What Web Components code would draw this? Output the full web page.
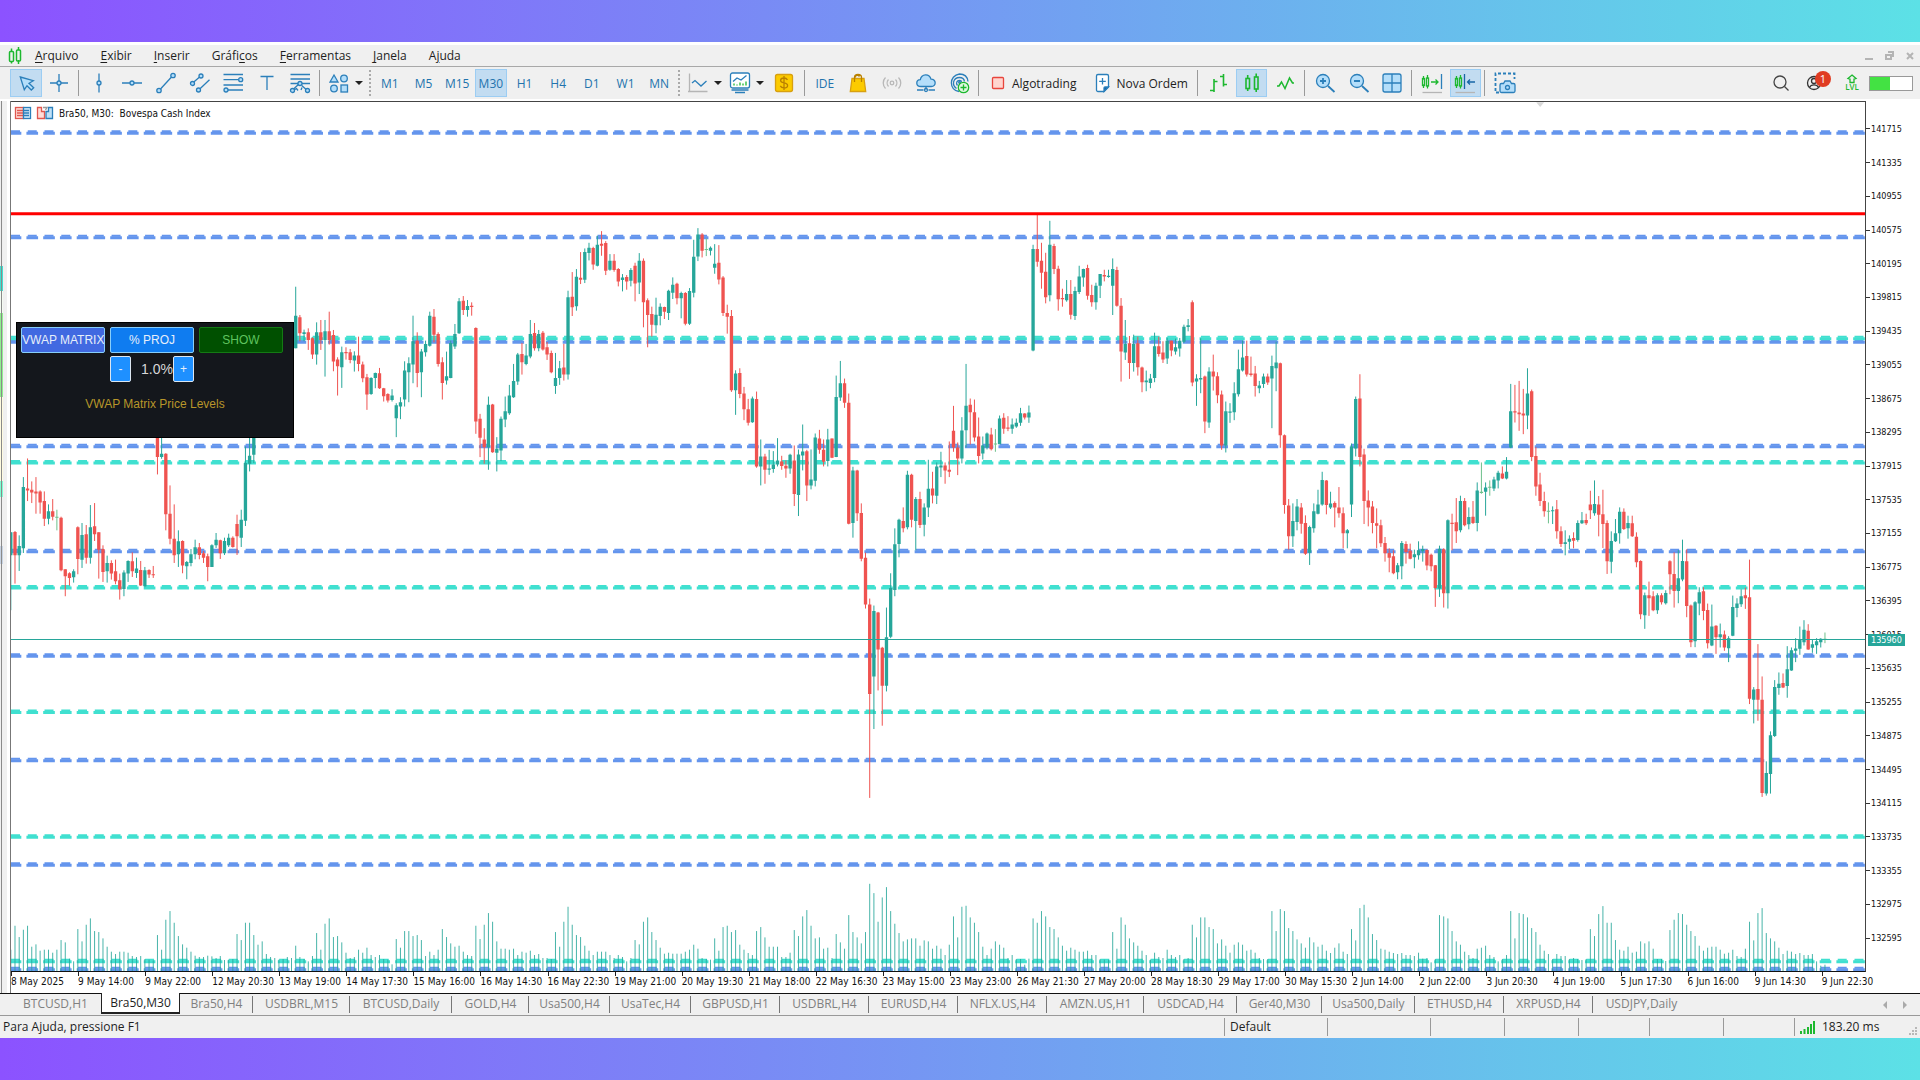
<!DOCTYPE html>
<html lang="pt-BR">
<head>
<meta charset="utf-8">
<meta name="viewport" content="width=device-width, initial-scale=1">
<title>Bra50, M30</title>
<style>
html, body {
  margin: 0;
  height: 100%;
}
body {
  font-family: 'Open Sans', 'Noto Sans', sans-serif;
  font-size: 12px;
  color: #1e1e1e;
}
</style>
</head>
<body>
<trade-desk>
  <menu-bar slot="top"></menu-bar>
  <tool-bar slot="top"></tool-bar>
  <price-chart heading="Bra50, M30:  Bovespa Cash Index" price="135960">
    <matrix-panel></matrix-panel>
  </price-chart>
  <chart-tabs slot="bottom"></chart-tabs>
  <status-bar slot="bottom"></status-bar>
</trade-desk>

<script>
const GREEN = '#1db82f';

const ICONS = {
  logo: `<g fill="none" stroke="${GREEN}" stroke-width="1.5"><rect x="6.5" y="7.5" width="4" height="10" rx="1"/><path d="M8.500 4.500v3M8.500 17.500v2M15.500 3v3M15.500 16v4"/><rect x="13.500" y="6" width="4" height="11" rx="1"/></g>`,
  cursor: '<path class="f" d="M6.300 6l13 3.700-4.300 2.600 4.700 4.400-2.400 2.300-4.300-4.300-2.700 4z"/>',
  cross: '<path d="M12 3v7M12 14v7M3 12h7M14 12h7"/><circle class="f" cx="12" cy="12" r="2"/>',
  vline: '<path d="M12 2.500v7.500M12 14v7.500"/><circle class="f" cx="12" cy="12" r="2"/>',
  hline: '<path d="M2 12h8M14 12h8"/><circle class="f" cx="12" cy="12" r="2"/>',
  trend: '<path d="M6.500 18L17.500 6"/><circle class="f" cx="5" cy="19.500" r="2.200"/><circle class="f" cx="19" cy="4.500" r="2.200"/>',
  channel: '<path d="M5.800 11L11.300 6.300M12 17.700L21.500 8.700"/><circle class="f" cx="4.500" cy="12.500" r="2"/><circle class="f" cx="13" cy="5" r="2"/><circle class="f" cx="10.500" cy="19" r="2"/>',
  fibo: '<path d="M2.500 3.500h19.500M2.500 8.700h15M2.500 14h19.500M7 19h15"/><circle class="f" cx="19.700" cy="8.700" r="2"/><circle class="f" cx="5" cy="19" r="2"/>',
  text: '<path d="M5.500 5.500h13M12 5.500v13.500"/>',
  pattern: '<path d="M2.500 3.500h19.500M2.500 8h19.500M2.500 12.500h7.500M14 12.500h8M5.500 18l5-4.500M13.700 14.500l4.500 4M6 19l2.500-1.500 1.500 2M14 16.500l-1 2.500"/><circle class="f" cx="12" cy="12.500" r="2"/><circle class="f" cx="4.500" cy="19.500" r="2"/><circle class="f" cx="19.500" cy="19.500" r="2"/>',
  shapes: '<path class="f" d="M7 4l4 7H3z"/><circle class="f" cx="17" cy="7.500" r="3.300"/><circle class="f" cx="7" cy="17.500" r="3.300"/><rect class="f" x="14" y="14" width="6.500" height="7"/>',
  linechart: '<path stroke="#b5b5b5" d="M3.500 2.500v18h18M2 20.500h1.500"/><path d="M6 12l3-2.500 6 5.500 5.500-5"/>',
  indicators: '<rect x="2.500" y="2" width="19" height="15" rx="2" fill="#fff"/><path d="M5 10.500l4-3.500 4 2 5.500-4.500"/><path stroke="#1db82f" d="M6 14.500v-2M9 14.500v-1M12 14.500v-3M15 14.500v-2M18 14.500v-4"/><path d="M3.500 19h17M7 21.500h10"/>',
  dollar: '<rect x="3.500" y="3.500" width="17" height="17" rx="2" fill="#fccb00" stroke="#d8a010"/><path stroke="#b98000" fill="none" d="M15.500 8.800c-.8-1.200-2-1.800-3.500-1.800-2 0-3.400.8-3.400 2.400 0 3.400 7 1.600 7 5 0 1.600-1.500 2.500-3.600 2.500-1.600 0-3-.6-3.700-2M12 5v14"/>',
  bag: '<path fill="#fccb00" stroke="#d8a010" d="M6 7.500h12l1.700 13H4.300z"/><path stroke="#b98000" d="M8.500 11V6.500c0-4 7-4 7 0V11M9 6.500c.5-2 3-3 4.500-1"/>',
  signal: '<g stroke="#b8b8b8"><circle cx="12" cy="12" r="1.800"/><path d="M8.500 8.500c-1.800 2-1.800 5 0 7M15.500 8.500c1.800 2 1.800 5 0 7M5.500 6.500c-3 3-3 8 0 11M18.500 6.500c3 3 3 8 0 11"/></g>',
  cloud: '<path class="f" d="M7 15.500c-5.500 0-5.500-6.500-.7-6.800C7.500 2.300 15.500 2.300 17 8.200c5.500-.2 5.500 7.300.3 7.300z"/><path d="M12 15.500v3M3 19h6.500M14.500 19H21"/><circle cx="12" cy="19" r="1.500"/>',
  vps: '<path d="M12 20.500c-10-1-10.500-16 .500-17.500 5 0 8 3 8.500 7.500M9.500 17.500C4.500 14 6 6.500 12.500 6.500c3 0 4.700 2 5 4M10.500 14.500c-2-2.500-.5-5 2-5 1 0 2 .5 2 1.500"/><circle cx="12.500" cy="11.500" r=".8"/><circle cx="16.500" cy="16.500" r="5.200" fill="#dff8e0" stroke="#1db82f"/><path stroke="#1db82f" d="M16.500 13.500v6M13.500 16.500h6"/>',
  stop: '<rect x="6.500" y="6.500" width="11" height="11" rx="1" fill="#ffd5cf" stroke="#e8453c"/>',
  order: '<path fill="#fff" d="M8 3.500h9a1.500 1.500 0 0 1 1.500 1.500v11l-4.500 4.500H8A1.500 1.500 0 0 1 6.500 19V5A1.500 1.500 0 0 1 8 3.500z"/><path fill="#1766a6" d="M14 20.500V17a1 1 0 0 1 1-1h3.500z"/><path d="M12.500 7v6.500M9.200 10.300h6.600"/>',
  bars: `<g stroke="${GREEN}" stroke-width="1.600"><path d="M8 8v13M4 19.500h4M8 10.500h3.500M17.500 3v12.500M14 5.500h3.500M17.500 13.500H21"/></g>`,
  candles: `<g stroke="${GREEN}" stroke-width="1.600"><rect x="6" y="7.500" width="3.500" height="10"/><path d="M7.700 4v3.500M7.700 17.500V20M16.200 2.500V6M16.200 18v3"/><rect x="14.500" y="6" width="3.500" height="12"/></g>`,
  zigzag: `<path stroke="${GREEN}" stroke-width="1.500" d="M4 15h2l2.500-4 3.500 6.500L16.500 7l3 5H21"/>`,
  zoomin: '<circle class="f" cx="10" cy="10" r="6.500"/><path stroke-width="1.800" d="M15 15l6.500 6M7 10h6M10 7v6"/>',
  zoomout: '<circle class="f" cx="10" cy="10" r="6.500"/><path stroke-width="1.800" d="M15 15l6.500 6M7 10h6"/>',
  tile: '<rect class="f" x="3" y="3" width="18" height="18" rx="2"/><path d="M12 3v18M3 12h18"/>',
  shift: `<g stroke="${GREEN}"><rect x="2.500" y="7.500" width="2" height="7"/><path d="M3.500 5v2.500M3.500 14.500V17M7.500 4v3M7.500 15v2.500"/><rect x="6.500" y="7" width="2" height="8"/><path d="M11 11h7M15.500 8.500L18 11l-2.500 2.500"/></g><path d="M21.500 3v15"/><path stroke="#b5b5b5" d="M2.500 21.500H22"/>`,
  autoscroll: `<g stroke="${GREEN}"><rect x="2.500" y="7.500" width="2" height="7"/><path d="M3.500 5v2.500M3.500 14.500V17M7.500 4v3M7.500 15v2.500"/><rect x="6.500" y="7" width="2" height="8"/></g><path stroke="#1766a6" d="M11.500 3v15M14.500 11H22M17 8.500L14.500 11l2.500 2.500"/><path stroke="#b5b5b5" d="M2.500 21.500H22"/>`,
  camera: '<path stroke-width="1.800" stroke-dasharray="3 2" d="M6 21.500H2.500v-19h19V8"/><path class="f" d="M8.500 12.500h2l1.500-2.500h5l1.500 2.500h2a1.500 1.500 0 0 1 1.500 1.500v6a1.500 1.500 0 0 1-1.500 1.500h-12A1.500 1.500 0 0 1 7 20v-6a1.500 1.500 0 0 1 1.500-1.500z"/><circle cx="14.500" cy="16.500" r="2"/>',
  search: '<g stroke="#444"><circle cx="11" cy="11" r="6"/><path d="M15.500 15.500l4 4"/></g>',
  user: '<g stroke="#333"><circle cx="12" cy="12" r="6.500"/><circle cx="12" cy="10" r="2.500"/><path d="M7.500 16.500c1.500-3.500 7.500-3.500 9 0"/></g>',
  up: `<path stroke="${GREEN}" d="M12 8l4 3.500-2 .5v3.500h-4V12l-2-.5z"/>`,
  list: '<rect x="4.500" y="6.500" width="8" height="11" fill="#ffdcd8" stroke="#e0574f"/><path stroke="#e0574f" d="M6 9.500h6M6 12h6M6 14.500h6"/><rect x="12.500" y="6.500" width="7" height="11" fill="#d5eaf9"/><path d="M13 9.500h5M13 12h5M13 14.500h5"/>',
  trade: '<path fill="#ffdcd8" stroke="#e0574f" d="M4.500 6.500h4v4h3v7h-7z"/><path fill="#bfe0f7" d="M19.500 6.500h-4v4h-2.500v7h6.500z"/><path stroke="#999" d="M10 6.500h4l-1.500 2.500"/>',
};

const ICON_STYLE = `
svg {
  display: block;
  fill: none;
  stroke: #2b7fba;
  stroke-width: 1.300;
}
.f {
  fill: #b4defa;
}
`;

/** Registers an element whose shadow root is built from the given markup. */
function define(name, render, setup) {
  window.customElements.define(name, class extends HTMLElement {
    connectedCallback() {
      if (this.shadowRoot) {
        return;
      }
      const root = this.attachShadow({mode: 'open'});
      root.innerHTML = render(this);
      if (setup) {
        setup(this, root);
      }
    }
  });
}

define('ui-icon', (el) => `
<style>
:host {
  display: block;
  flex: none;
  white-space: normal;
}
${ICON_STYLE}
</style>
<svg width="24" height="24" viewBox="0 0 24 24" aria-hidden="true">${ICONS[el.getAttribute('name')]}</svg>
`);

define('trade-desk', () => `
<style>
:host {
  display: flex;
  flex-direction: column;
  box-sizing: border-box;
  min-height: 100vh;
  padding: 42px 0;
  background: linear-gradient(90deg, #8c52ff, #5ce1e6);
}
main {
  flex: 1;
  display: flex;
  background: #fff;
}
.gutter {
  flex: none;
  box-sizing: border-box;
  width: 11px;
  border-right: 1px solid #777;
  background:
    linear-gradient(#8a8a8a, #8a8a8a) 1px 0 / 1px 100% no-repeat,
    linear-gradient(90deg, transparent 3px, #f0f0f0 3px 7px, #fff 7px),
    linear-gradient(#eee 0 165px, #40e0d0 165px 190px, #f4fbf2 190px 212px, #90f090 212px 296px, #fffbe0 296px 380px, #7fffd4 380px 396px, #f0f0f0 396px 445px, #c8d4e4 445px 463px, #f0f0f0 463px);
}
::slotted(price-chart) {
  flex: 1;
}
</style>
<slot name="top"></slot>
<main><div class="gutter"></div><slot></slot></main>
<slot name="bottom"></slot>
`);

define('menu-bar', () => `
<style>
:host {
  display: flex;
  align-items: center;
  height: 21px;
  padding-left: 3px;
  border-top: 3px solid #fff;
  border-bottom: 1px solid #a8a8a8;
  background: #f0f0f0;
}
nav {
  flex: 1;
  display: flex;
  gap: 22px;
  padding-left: 8px;
}
button {
  padding: 0;
  border: 0;
  background: none;
  font: inherit;
  color: inherit;
}
u {
  text-underline-offset: 2px;
}
.window {
  display: flex;
  gap: 12px;
  padding-right: 6px;
}
.window svg {
  display: block;
  fill: none;
  stroke: #b4b4b4;
  stroke-width: 2;
}
</style>
<ui-icon name="logo"></ui-icon>
<nav>
  <button><u>A</u>rquivo</button>
  <button><u>E</u>xibir</button>
  <button><u>I</u>nserir</button>
  <button>Gráfi<u>c</u>os</button>
  <button><u>F</u>erramentas</button>
  <button><u>J</u>anela</button>
  <button>A<u>j</u>uda</button>
</nav>
<div class="window">
  <button aria-label="Minimizar"><svg width="8" height="10"><path d="M0 8h8"/></svg></button>
  <button aria-label="Restaurar"><svg width="9" height="10"><path d="M1 4h5v4H1zM3 1h5v5" /></svg></button>
  <button aria-label="Fechar"><svg width="8" height="10"><path d="M1 2l6 6M7 2L1 8"/></svg></button>
</div>
`);

define('tool-button', () => `
<style>
:host {
  display: flex;
  flex: 1 0 auto;
}
button {
  flex: 1;
  display: flex;
  align-items: center;
  justify-content: center;
  box-sizing: border-box;
  height: 28px;
  margin: 0 1px;
  padding: 0;
  border: 1px solid transparent;
  background: none;
  font: inherit;
  font-size: 12px;
  color: #2273ad;
}
:host([on]) button {
  border-color: #9ccdf3;
  background: #c2dcf1;
}
:host([wide]) button {
  color: #1e1e1e;
}
:host([drop]) button {
  justify-content: flex-start;
  padding-left: 2px;
}
:host([drop]) button::after {
  content: '';
  margin-left: 4px;
  border: 4px solid transparent;
  border-top-color: #222;
  border-bottom: 0;
}
</style>
<button><slot></slot></button>
`, (el, root) => {
  const label = el.getAttribute('label');
  if (label) {
    root.querySelector('button').setAttribute('aria-label', label);
  }
});

const tool = (icon, label, flags = '') =>
  `<tool-button label="${label}" ${flags}><ui-icon name="${icon}"></ui-icon></tool-button>`;

define('tool-bar', () => `
<style>
:host {
  display: flex;
  align-items: center;
  height: 32px;
  padding: 0 7px 0 9px;
  border-bottom: 2px solid #fff;
  background: #f0f0f0;
}
.group {
  display: flex;
  flex: none;
}
.group tool-button {
  flex: 1 1 0;
}
.w34 { width: 34px; }
.w67 { width: 67px; }
.w101 { width: 101px; }
i {
  flex: none;
  width: 1px;
  height: 26px;
  margin: 0 3px 0 2px;
  background: #9a9a9a;
}
i.grip {
  background: repeating-linear-gradient(#aaa 0 2px, transparent 2px 4px);
  width: 2px;
  margin: 0 2px;
}
.group .dollar {
  flex: 0 0 36px;
}
.right {
  display: flex;
  align-items: center;
  margin-left: auto;
  gap: 9px;
}
.account {
  position: relative;
  margin: 0 3px 0 -4px;
}
.badge {
  position: absolute;
  top: 2px;
  right: -3px;
  width: 16px;
  border-radius: 8px;
  background: #e03c22;
  color: #fff;
  font-size: 11px;
  line-height: 16px;
  text-align: center;
}
.lvl {
  display: flex;
  flex-direction: column;
  align-items: center;
  width: 24px;
  font-size: 8px;
  font-weight: 600;
  line-height: 8px;
  color: ${GREEN};
}
.lvl ui-icon {
  margin: -7px 0 -8px;
}
.lvl span {
  padding-bottom: 2px;
}
meter {
  appearance: none;
  box-sizing: border-box;
  width: 44px;
  height: 15px;
  margin-left: -4px;
  border: 1px solid #999;
  background: #fff;
}
meter::-webkit-meter-inner-element {
  height: 13px;
}
meter::-webkit-meter-bar {
  height: 13px;
  border: 0;
  border-radius: 0;
  background: #fff;
}
meter::-webkit-meter-optimum-value {
  background: #43e243;
}
.orders {
  width: 213px;
}
.orders tool-button {
  flex: 0 0 auto;
}
.orders ui-icon {
  margin: 0 2px 0 2px;
}
.orders tool-button + tool-button {
  margin-left: 8px;
}
</style>
<div class="group w67">${tool('cursor', 'Cursor', 'on')}${tool('cross', 'Mira')}</div>
<i></i>
<div class="group" style="width: 235px">
  ${tool('vline', 'Linha vertical')}${tool('hline', 'Linha horizontal')}${tool('trend', 'Linha de tendência')}
  ${tool('channel', 'Canal')}${tool('fibo', 'Fibonacci')}${tool('text', 'Texto')}${tool('pattern', 'Elliott')}
</div>
<i></i>
<div class="group" style="width: 44px">${tool('shapes', 'Objetos', 'drop')}</div>
<i class="grip"></i>
<div class="group" style="width: 303px">
  ${['M1', 'M5', 'M15', 'M30', 'H1', 'H4', 'D1', 'W1', 'MN'].map((x) =>
    `<tool-button ${x === 'M30' ? 'on' : ''}>${x}</tool-button>`).join('')}
</div>
<i class="grip"></i>
<div class="group" style="width: 120px">
  ${tool('linechart', 'Tipo de gráfico', 'drop')}${tool('indicators', 'Indicadores', 'drop')}${tool('dollar', 'Cotações', 'class="dollar"')}
</div>
<i></i>
<div class="group" style="width: 168px">
  <tool-button>IDE</tool-button>${tool('bag', 'Mercado')}${tool('signal', 'Sinais')}${tool('cloud', 'Nuvem')}${tool('vps', 'VPS')}
</div>
<i></i>
<div class="group orders">
  <tool-button wide><ui-icon name="stop"></ui-icon>Algotrading</tool-button>
  <tool-button wide><ui-icon name="order"></ui-icon>Nova Ordem</tool-button>
</div>
<i></i>
<div class="group w101">${tool('bars', 'Barras')}${tool('candles', 'Candles', 'on')}${tool('zigzag', 'Linha')}</div>
<i></i>
<div class="group w101">${tool('zoomin', 'Ampliar')}${tool('zoomout', 'Reduzir')}${tool('tile', 'Janelas')}</div>
<i></i>
<div class="group w67">${tool('shift', 'Rolagem')}${tool('autoscroll', 'Deslocamento', 'on')}</div>
<i></i>
<div class="group w34">${tool('camera', 'Captura')}</div>
<div class="right">
  ${tool('search', 'Pesquisar')}
  <div class="account">${tool('user', 'Conta')}<span class="badge">1</span></div>
  <div class="lvl"><ui-icon name="up"></ui-icon><span>LVL</span></div>
  <meter value="0.48" aria-label="Nível"></meter>
</div>
`);

define('matrix-panel', () => `
<style>
:host {
  display: block;
  box-sizing: border-box;
  width: 278px;
  height: 116px;
  padding: 4px;
  border: 1px solid #000;
  background: #14171c;
  font: 12px/14px 'Liberation Sans', Arial, sans-serif;
}
.row {
  display: grid;
  grid-template-columns: repeat(3, 84px);
  gap: 5px;
}
button {
  box-sizing: border-box;
  height: 26px;
  padding: 0;
  border: 1px solid #87cefa;
  border-radius: 2px;
  color: #e6eefa;
  font: inherit;
  white-space: nowrap;
  overflow: hidden;
}
.matrix { background: #4169e1; }
.proj { background: #0f7cf0; }
.show {
  border-color: #147a14;
  background: #005000;
  color: #5fc45f;
}
.step {
  grid-column: 2;
  display: flex;
  align-items: center;
  justify-content: space-between;
  margin-top: -2px;
}
.step button {
  width: 21px;
  border-color: #dce6f0;
  background: #1e90ff;
}
output {
  padding-left: 10px;
  color: #d8d8d8;
  font-size: 14px;
}
p {
  margin: 15px 0 0;
  color: #b8962a;
  text-align: center;
}
</style>
<div class="row">
  <button class="matrix">VWAP MATRIX</button>
  <button class="proj">% PROJ</button>
  <button class="show">SHOW</button>
  <div class="step"><button>-</button><output>1.0%</output><button>+</button></div>
</div>
<p>VWAP Matrix Price Levels</p>
`);

// g: up, r: down, d: unchanged; then high, body top, body bottom, low,
// measured downwards in chart units.
const CANDLES = `
g995 996 1065 1230,r992 995 1065 1150,g1005 1037 1065 1112,g830 860 1044 1058,r774 864 870 902,r843 868 876 908,
r830 873 879 940,r870 873 906 940,r873 902 955 977,g912 933 955 972,r896 933 949 960,d928 949 952 990,
r949 952 1110 1113,r1107 1107 1128 1188,r1116 1119 1133 1156,g1107 1113 1131 1147,r978 981 1076 1122,g968 1004 1078 1103,
r974 1002 1072 1090,g914 981 1072 1090,r908 978 1002 1022,r996 996 1048 1135,r1035 1046 1115 1145,g1066 1088 1113 1147,
r1080 1088 1120 1138,r1078 1113 1143 1152,r1120 1140 1167 1198,g1110 1117 1166 1188,g1080 1082 1120 1145,r1056 1083 1113 1130,
g1072 1105 1118 1133,r1082 1109 1156 1157,g1100 1110 1158 1161,r1107 1109 1123 1133,r1097 1122 1125 1133,r640 670 770 822,
g690 760 770 775,r758 760 942 990,r855 940 1015 1032,r912 1015 1065 1088,g990 1023 1062 1100,r1020 1022 1096 1119,
g1082 1085 1098 1137,g1046 1062 1088 1098,g1018 1041 1062 1077,r1028 1041 1064 1077,r1052 1059 1072 1088,r1060 1068 1100 1143,
g1032 1035 1100 1100,g998 1018 1035 1043,r1018 1020 1059 1076,g1012 1022 1059 1064,g1000 1012 1035 1040,r1008 1012 1040 1042,
r943 971 1008 1064,g928 958 1012 1040,g738 788 961 977,g680 766 790 813,g560 600 763 788,g540 560 600 640,
r545 560 590 620,g530 550 590 610,g500 520 550 570,r510 520 545 560,g490 510 545 560,g480 490 510 530,
r470 490 500 520,g440 460 500 510,g258 345 443 443,r343 350 398 422,g387 395 400 422,r383 395 418 448,
r410 413 462 475,g365 395 462 492,r358 395 418 448,g358 392 418 528,r333 392 418 432,r388 403 483 512,
r470 477 497 585,g438 455 500 562,r440 454 458 477,r445 455 478 488,g452 465 480 513,r408 465 490 512,
r483 492 533 545,r520 530 582 628,g530 532 580 583,g516 517 532 563,r502 518 563 565,r562 563 587 603,
r578 580 600 606,g566 585 598 603,g608 614 653 710,g590 605 618 656,g482 510 597 618,g470 488 515 605,
g345 422 492 548,r395 420 517 560,g445 453 515 590,g420 430 455 468,g333 345 435 438,r325 348 402 425,
r395 400 490 498,r470 485 547 597,g453 527 540 552,g420 427 532 533,g370 400 438 445,g292 302 398 400,
r286 300 328 343,g298 316 328 348,r305 315 319 345,r380 382 663 700,r640 655 712 770,r683 717 740 790,
g588 613 740 808,r610 612 755 757,g710 745 757 813,g648 655 750 782,g588 632 657 680,g553 585 638 643,
g490 541 590 592,g457 462 543 553,r427 460 485 522,g430 465 490 494,g358 400 468 473,r367 397 443 450,
g388 400 443 452,r391 396 447 450,r424 440 462 478,r450 457 515 518,g457 532 556 580,g481 503 532 553,
r430 501 522 540,g270 290 522 537,r214 288 320 346,g205 228 317 330,r154 231 237 250,g143 154 237 247,
g126 141 157 179,r138 142 191 207,g105 132 195 197,r91 129 135 165,r121 127 210 223,g160 180 207 210,
r160 180 208 213,r202 205 242 257,g220 230 238 272,r223 229 242 267,g202 208 240 257,r186 195 248 302,
g157 180 245 280,r173 180 305 380,r293 299 343 440,r318 340 372 408,g291 342 374 398,g308 318 346 374,
r318 319 333 355,g267 270 337 358,g230 252 276 295,r246 249 293 311,g273 277 293 353,r274 277 369 374,
g262 271 369 373,g117 168 276 290,g82 101 167 181,r97 101 150 170,d113 145 148 166,g137 141 150 164,
g130 189 201 219,r133 186 236 251,r226 230 337 346,r312 337 348 399,r328 346 569 574,g509 519 569 643,
r503 517 580 593,r559 579 626 659,r595 626 667 675,g588 594 665 667,r573 595 798 802,g717 768 798 855,
r760 768 808 850,g748 804 808 823,g752 792 806 817,g713 780 792 798,r766 783 797 808,r780 796 804 832,
g760 763 804 820,r735 780 881 917,g747 762 884 947,g672 753 765 810,r748 752 855 902,g747 837 855 867,
g699 711 841 858,r688 714 748 760,r717 748 784 798,g685 717 782 798,r714 714 772 773,g525 589 770 770,
g481 548 591 601,r534 548 607 622,r579 607 970 972,g799 810 968 1012,r808 810 939 962,r909 938 1075 1083,
r1057 1072 1213 1225,r1195 1213 1482 1794,g1216 1232 1429 1587,r1235 1237 1348 1471,r1340 1343 1457 1577,g1222 1311 1457 1474,
g1119 1163 1310 1314,g984 1032 1169 1188,g955 958 1031 1071,r921 962 984 996,g811 823 981 987,r820 823 958 981,
g890 896 962 1050,r874 896 974 983,g909 921 973 1008,g778 865 921 950,r814 864 885 909,g786 798 886 911,
g754 795 801 830,r786 795 810 850,r723 808 814 830,r616 691 741 754,r726 741 774 824,g650 690 774 789,
g490 616 689 741,r594 613 635 732,r597 635 711 723,r651 708 767 789,g708 735 759 777,g696 699 741 747,
r682 702 746 750,d686 729 732 754,g645 654 731 731,r638 652 685 700,r647 681 685 692,g654 672 685 700,
g654 667 678 682,g622 638 667 676,r638 639 651 657,g615 636 651 667,g132 145 450 452,r38 145 183 198,
r126 180 216 264,r156 213 290 308,g60 132 284 302,r129 136 205 220,r195 204 296 330,r264 292 296 318,
g238 280 299 303,r238 280 342 356,g258 271 346 358,g195 227 274 280,g204 205 230 258,r192 202 285 297,
r252 283 305 318,g246 255 305 327,g220 220 255 292,r207 223 227 242,g207 225 229 231,g173 205 255 343,
r198 208 315 318,r292 315 453 543,g358 430 456 478,r406 428 487 535,g402 430 487 513,r408 428 500 525,
r498 501 545 575,g510 540 545 572,g520 534 547 563,g396 437 532 545,r408 437 460 468,r422 456 477 487,
g411 420 474 490,r420 420 450 467,g414 440 453 462,g412 420 444 468,g372 378 423 427,g355 374 379 392,
r299 305 546 557,g521 534 543 616,g413 532 537 578,r525 528 663 698,g500 513 666 682,r462 513 528 570,
r515 527 584 608,r570 582 735 748,g603 632 735 756,g608 633 637 667,g545 578 635 659,g447 506 581 588,
g420 471 510 513,r420 466 522 528,r468 519 523 528,r496 519 556 588,g541 555 563 578,g519 528 550 562,
r519 528 546 553,g465 496 534 683,g423 486 503 572,r486 488 704 742,r702 704 914 940,r896 915 1008 1048,
g909 962 1008 1040,g896 918 965 990,r908 921 970 1000,r945 968 1060 1064,g976 980 1057 1094,g909 933 984 997,
g868 912 940 942,g814 839 912 916,r839 840 914 942,g874 909 921 926,r903 908 921 981,r860 921 939 952,
r921 939 999 1044,g986 990 999 1044,g729 738 912 950,g588 595 744 768,r521 594 770 798,r745 762 902 971,
r870 900 921 978,r902 918 968 999,r924 969 976 1044,r958 975 1029 1040,r1010 1028 1059 1084,r1044 1058 1072 1116,
r1050 1068 1119 1122,g1088 1095 1116 1137,g1022 1028 1098 1137,r1023 1031 1055 1090,r1030 1051 1075 1077,g1048 1062 1071 1104,
g1023 1050 1065 1078,g1036 1046 1053 1084,r1047 1049 1096 1110,r1060 1063 1098 1113,r1094 1095 1163 1220,g1036 1045 1165 1190,
r1044 1047 1179 1222,g957 960 1179 1225,r940 967 971 1050,r893 966 993 1028,g886 902 990 996,r893 902 975 978,
g921 950 972 987,r902 949 968 971,g846 870 968 993,d786 874 878 880,g846 861 874 946,d840 859 862 886,
g829 837 864 872,g811 817 840 864,r798 819 834 836,g770 814 834 837,g550 632 741 743,r553 632 636 666,
r541 636 641 691,r565 639 645 701,g503 579 645 686,r567 572 770 782,r740 767 858 886,r817 852 902 917,
r874 902 933 949,d906 931 934 969,g918 930 933 971,r899 927 993 1015,r978 993 1031 1040,g990 1026 1031 1065,
g1005 1015 1024 1047,r996 1013 1021 1044,g960 968 1019 1024,g935 960 969 971,r940 959 969 974,r871 912 930 956,
g840 911 939 946,r887 912 943 1008,r868 942 971 1043,r960 968 1083 1121,g993 1022 1084 1119,g956 999 1023 1025,
g921 934 999 1030,r924 934 986 989,g946 968 984 1015,r946 969 1008 1010,r996 1009 1086 1101,r1080 1082 1242 1257,
g1177 1185 1245 1286,r1144 1185 1194 1247,r1173 1188 1230 1233,g1179 1185 1230 1241,r1179 1185 1206 1213,g1170 1178 1209 1213,
r1080 1083 1122 1182,r1056 1121 1172 1222,g1049 1134 1172 1209,g1018 1082 1138 1143,r1047 1083 1217 1251,r1213 1216 1326 1341,
g1203 1206 1323 1341,g1161 1176 1210 1245,r1161 1173 1232 1260,r1210 1229 1329 1345,g1213 1279 1336 1338,r1275 1277 1311 1361,
g1270 1302 1311 1342,r1291 1303 1342 1352,g1308 1314 1344 1386,g1186 1220 1307 1308,g1194 1210 1223 1251,g1167 1188 1212 1220,
r1162 1185 1194 1226,r1078 1191 1496 1512,g1461 1468 1499 1570,r1332 1467 1499 1562,r1429 1499 1779 1791,g1684 1719 1781 1787,
g1594 1606 1722 1781,g1440 1461 1608 1611,g1417 1451 1464 1484,r1420 1449 1462 1464,g1338 1407 1458 1493,g1342 1350 1411 1412,
g1314 1345 1352 1386,g1279 1319 1346 1364,g1260 1289 1326 1336,r1272 1292 1348 1349,g1318 1332 1343 1358,g1314 1323 1335 1361,
g1314 1316 1326 1342,d1297 1316 1318 1329`.split(',').map((x) => {
  const row = x.trim();
  return [row[0], ...row.slice(1).split(' ').map(Number)];
});

// Tops of the volume bars; 304 is the floor of the pane.
const VOLUMES = `
240 168 202 180 168 231 224 243 240 240 249 240 211 218 267 275 178 215 165 146 184 187 206 231 246 253 246 246 249 259
262 259 268 270 272 196 240 150 124 159 199 224 234 246 258 262 262 258 260 265 259 271 270 268 193 211 159 159 196 225
215 253 262 265 270 268 262 265 228 262 268 275 259 190 240 162 146 202 199 218 249 265 262 240 249 234 256 262 256 268
270 284 208 234 184 184 199 196 211 259 246 256 240 178 202 221 231 228 246 256 259 168 208 165 130 156 215 237 237 240
237 256 246 249 243 256 253 265 265 268 187 231 156 111 165 196 202 228 243 256 246 246 246 256 265 256 262 275 265 211
224 156 143 187 211 234 252 249 252 252 252 246 240 225 237 265 268 270 206 243 172 168 187 181 225 240 250 256 184 172
203 231 231 231 262 262 249 181 199 140 121 168 206 203 237 234 265 193 218 237 136 187 203 221 187 42 70 156 83 52
124 162 190 215 209 206 206 228 212 215 237 228 237 256 225 140 203 111 108 143 159 187 231 256 237 215 225 234 265 256
268 268 285 267 146 159 124 140 172 178 203 228 243 234 240 246 246 243 256 256 268 270 270 187 237 143 165 206 218 228
243 256 270 249 262 265 240 256 262 256 268 265 165 203 143 143 172 178 221 209 228 249 225 218 225 243 240 249 265 268
268 124 184 118 124 175 184 209 221 234 203 218 231 225 243 250 234 221 246 253 178 212 115 105 143 193 211 237 240 246
250 253 250 256 256 259 249 267 265 278 268 136 140 146 184 215 225 246 256 265 237 234 228 256 262 275 268 256 124 206
130 133 143 175 187 225 243 253 268 253 259 259 268 265 268 271 268 178 199 133 109 159 159 211 240 243 231 249 246 215
221 215 237 268 268 274 181 150 130 133 165 184 199 228 243 234 231 231 240 252 249 240 259 262 237 156 212 130 115 190
206 215 234 253 243 246 253 250 256 256 253 275 288 285`.trim().split(/\s+/).map(Number);

const DATES = [
  '8 May 2025', '9 May 14:00', '9 May 22:00', '12 May 20:30', '13 May 19:00', '14 May 17:30', '15 May 16:00',
  '16 May 14:30', '16 May 22:30', '19 May 21:00', '20 May 19:30', '21 May 18:00', '22 May 16:30', '23 May 15:00',
  '23 May 23:00', '26 May 21:30', '27 May 20:00', '28 May 18:30', '29 May 17:00', '30 May 15:30', '2 Jun 14:00',
  '2 Jun 22:00', '3 Jun 20:30', '4 Jun 19:00', '5 Jun 17:30', '6 Jun 16:00', '9 Jun 14:30', '9 Jun 22:30',
];

const STEP = 12.576;
const FLOOR = 2314;
const UP = '#26a69a';
const COLORS = {g: UP, r: '#ef5350', d: '#6cc08b'};

// One dash is wide at the foot and a little narrower on top.
function drawLevel(y, color) {
  return `<g stroke="${color}">
    <path stroke-width="9" stroke-dasharray="35 15.304" stroke-dashoffset="4" d="M0 ${y + 1}H5565"/>
    <path stroke-width="6" stroke-dasharray="27 23.304" d="M0 ${y - 5}H5565"/>
  </g>`;
}

function drawPlot() {
  const x = (i) => i * STEP - 0.6;
  let out = '<path fill="#d8d8d8" d="M4578-296h24l-12 14z"/>';

  for (let i = 0; i < 9; i++) {
    out += drawLevel(-204 + Math.round(i * 314.15), '#6495ed');
  }
  for (let i = 0; i < 6; i++) {
    out += drawLevel(413 + Math.round(i * 374.4), '#40e0d0');
  }

  let bars = '';
  VOLUMES.forEach((v, i) => {
    bars += `M${x(i).toFixed(1)} ${FLOOR}v${v - 304}`;
  });
  out += `<path stroke="${UP}" stroke-width="3" opacity=".85" d="${bars}"/>`;

  for (const kind of 'grd') {
    let wicks = '';
    let bodies = '';
    CANDLES.forEach(([k, high, top, bottom, low], i) => {
      if (k !== kind) {
        return;
      }
      wicks += `M${x(i).toFixed(1)} ${high}V${low}`;
      bodies += `M${x(i).toFixed(1)} ${top}V${Math.max(bottom, top + 3)}`;
    });
    out += `<g stroke="${COLORS[kind]}"><path stroke-width="3" d="${wicks}"/><path stroke-width="10" d="${bodies}"/></g>`;
  }
  out += `<path stroke="${UP}" stroke-width="3" d="M0 1318H5565"/>`;
  out += '<path stroke="#f00" stroke-width="9" d="M0 39H5565"/>';
  return out;
}

define('price-chart', (el) => `
<style>
:host {
  display: grid;
  grid-template: 1fr 21px / 1fr 54px;
  font-family: 'DejaVu Sans Condensed', 'DejaVu Sans', sans-serif;
  font-size: 10px;
  color: #111;
}
.plot {
  position: relative;
  border-top: 1px solid #444;
  border-right: 1px solid #444;
  border-bottom: 1px solid #111;
}
.plot > svg {
  position: absolute;
  inset: 0;
  width: 100%;
  height: 100%;
  fill: none;
}
header {
  position: relative;
  display: flex;
  align-items: center;
  height: 22px;
  white-space: pre;
}
header ui-icon + ui-icon {
  margin: 0 2px 0 -2px;
}
::slotted(matrix-panel) {
  position: absolute;
  left: 5px;
  top: 220px;
}
.prices {
  position: relative;
  display: flex;
  flex-direction: column;
  padding: 11px 0 17px;
  font-size: 9px;
}
.prices span {
  flex: 1;
  display: flex;
  align-items: center;
  gap: 1px;
}
.prices span::before {
  content: '';
  width: 4px;
  height: 1px;
  background: #333;
}
.prices mark {
  position: absolute;
  left: 2px;
  top: 61.2%;
  padding: 0 3px;
  background: ${UP};
  color: #fff;
  line-height: 12px;
}
.dates {
  display: flex;
  white-space: nowrap;
}
.dates span {
  flex: 0 0 3.6156%;
  line-height: 20px;
}
.dates span::before {
  content: '';
  display: block;
  width: 1px;
  height: 4px;
  margin-bottom: -4px;
  background: #222;
}
</style>
<div class="plot">
  <svg viewBox="0 -297 5565 2611" preserveAspectRatio="none" aria-hidden="true">${drawPlot()}</svg>
  <header><ui-icon name="list"></ui-icon><ui-icon name="trade"></ui-icon>${el.getAttribute('heading')}</header>
  <slot></slot>
</div>
<div class="prices">
  ${Array.from({length: 25}, (_, i) => `<span>${141715 - i * 380}</span>`).join('')}
  <mark>${el.getAttribute('price')}</mark>
</div>
<div class="dates">${DATES.map((x) => `<span>${x}</span>`).join('')}</div>
`);

const TABS = [
  ['BTCUSD,H1', 91], ['Bra50,M30', 79], ['Bra50,H4', 73], ['USDBRL,M15', 97], ['BTCUSD,Daily', 102],
  ['GOLD,H4', 77], ['Usa500,H4', 81], ['UsaTec,H4', 81], ['GBPUSD,H1', 89], ['USDBRL,H4', 89], ['EURUSD,H4', 89],
  ['NFLX.US,H4', 89], ['AMZN.US,H1', 97], ['USDCAD,H4', 93], ['Ger40,M30', 85], ['Usa500,Daily', 93],
  ['ETHUSD,H4', 89], ['XRPUSD,H4', 89], ['USDJPY,Daily', 97],
];

define('chart-tabs', () => `
<style>
:host {
  display: flex;
  height: 21px;
  padding-left: 10px;
  border-top: 1px solid #111;
  border-bottom: 1px solid #999;
  background: #f0f0f0;
}
[role=tablist] {
  flex: 1;
  display: flex;
}
button {
  padding: 0;
  border: 0;
  background: none;
  font: inherit;
  color: #808080;
}
[role=tab] {
  flex: none;
  box-sizing: border-box;
  height: 19px;
  white-space: nowrap;
}
[role=tab]:nth-child(n + 3):not(:last-child) {
  background: linear-gradient(#777, #777) 100% 2px / 1px 17px no-repeat;
}
[aria-selected=true] {
  margin-top: -1px;
  height: 21px;
  border: 1px solid #222;
  border-top: 0;
  border-bottom-width: 2px;
  background: #fff;
  color: #1e1e1e;
}
.scroll {
  display: flex;
  gap: 16px;
  align-items: center;
  padding-right: 13px;
}
.scroll button {
  border: 4px solid transparent;
  border-right-color: #aaa;
  border-left: 0;
}
.scroll button + button {
  border-right: 0;
  border-left: 4px solid #aaa;
}
</style>
<div role="tablist">
  ${TABS.map(([name, width], i) =>
    `<button role="tab" aria-selected="${i === 1}" style="width: ${width}px">${name}</button>`).join('')}
</div>
<div class="scroll"><button aria-label="Anterior"></button><button aria-label="Próximo"></button></div>
`);

define('status-bar', () => `
<style>
:host {
  display: flex;
  align-items: stretch;
  height: 22px;
  background: #f0f0f0;
  line-height: 22px;
  white-space: nowrap;
}
.help {
  flex: 1;
  padding-left: 3px;
}
.cell {
  box-sizing: border-box;
  background: linear-gradient(#999, #999) 0 50% / 1px 18px no-repeat;
  padding-left: 6px;
  width: 74px;
}
.cell.wide {
  width: 103px;
}
.cell.narrow {
  width: 71px;
}
.ping {
  display: flex;
  align-items: center;
  gap: 7px;
  width: 126px;
}
.ping svg:last-child {
  margin-left: auto;
  align-self: flex-end;
}
svg {
  display: block;
}
</style>
<span class="help">Para Ajuda, pressione F1</span>
<span class="cell wide">Default</span>
<span class="cell wide"></span>
<span class="cell"></span>
<span class="cell"></span>
<span class="cell narrow"></span>
<span class="cell"></span>
<span class="cell narrow"></span>
<span class="cell ping">
  <svg width="15" height="13" aria-hidden="true"><path stroke="${GREEN}" stroke-width="2" d="M1 13v-3M4.500 13V8M8 13V6M11 13V3M14 13V0"/></svg>
  183.20 ms
  <svg width="12" height="12" aria-hidden="true"><path fill="#b8b8b8" d="M7 1h2v2H7zM4 4h2v2H4zM7 4h2v2H7zM1 7h2v2H1zM4 7h2v2H4zM7 7h2v2H7z"/></svg>
</span>
`);
</script>
</body>
</html>
